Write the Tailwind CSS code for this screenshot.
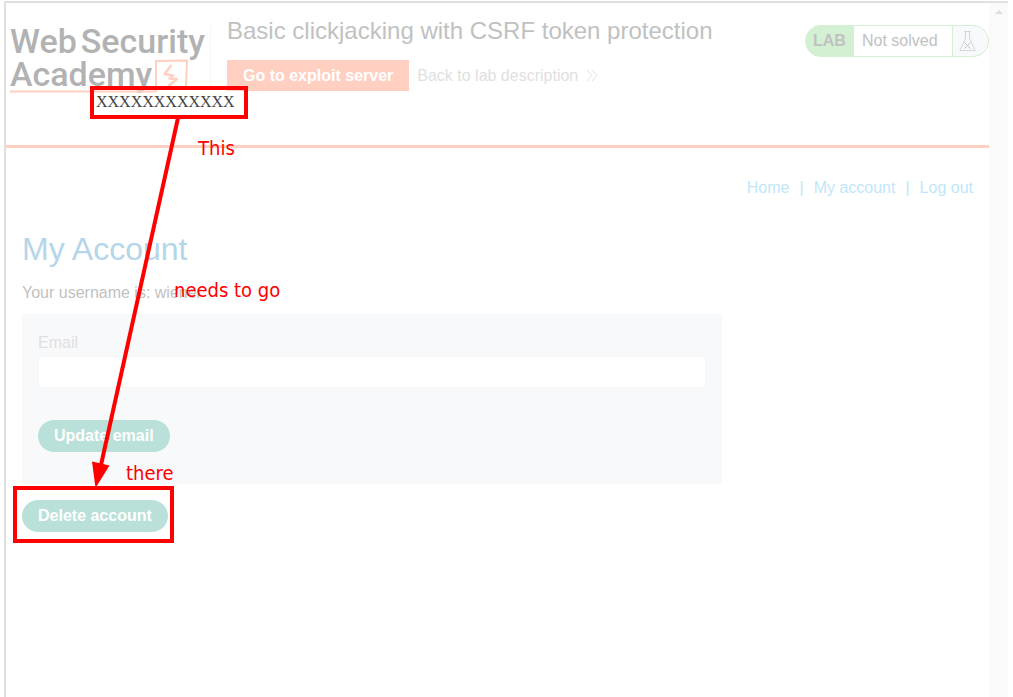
<!DOCTYPE html>
<html lang="en">
<head>
<meta charset="utf-8">
<title>Basic clickjacking with CSRF token protection</title>
<script src="https://cdn.jsdelivr.net/npm/@tailwindcss/browser@4"></script>
</head>
<body class="relative min-h-screen overflow-hidden bg-white pt-px pr-[5px] pl-1 font-['Liberation_Sans',Arial,sans-serif] text-base text-[#c1c1c1]">
<div class="flex min-h-screen border-t-2 border-l-2 border-[#e0e0e0]">
  <div class="min-w-0 flex-1">
    <header class="flex h-[145px] items-start border-b-3 border-[#ffd0c2]">
      <a href="#" aria-label="Web Security Academy" class="relative mt-[22px] ml-1 w-[201px] border-r border-[#f7f7f7] font-['Roboto',sans-serif] text-[34px] leading-[33px] font-medium whitespace-nowrap text-[#b2b2b2]">
        <span class="flex gap-1"><span>Web</span><span>Security</span></span>
        <span class="block">Academy</span>
        <svg class="absolute top-[33px] left-0" width="182" height="36" fill="none" stroke="#ffd0c2" aria-hidden="true">
          <path d="M-2 33.500H146M146 34V3L177 2.500L176 30" stroke-width="2"/>
          <path d="M161.500 7L154.500 16L163 17.500L159.500 20.500L167 21L158 28.500" stroke-width="2.500" stroke-linejoin="round"/>
        </svg>
      </a>
      <div class="min-w-0 flex-1 pt-3.5 pl-4">
        <h1 class="text-2xl leading-7 whitespace-nowrap">Basic clickjacking with CSRF token protection</h1>
        <div class="mt-[15px] flex items-center gap-2">
          <button class="h-[31px] bg-[#ffd0c2] px-4 font-bold whitespace-nowrap text-white">Go to exploit server</button>
          <a href="#" class="flex items-center gap-2 whitespace-nowrap text-[#e0e0e0]">Back to lab description
            <svg width="13" height="13" fill="none" stroke="#e0e0e0" aria-hidden="true"><path d="M1 1L6 6.500L1 12M6 1L11 6.500L6 12"/></svg>
          </a>
        </div>
      </div>
      <div class="mt-[22px] flex h-8 shrink-0 overflow-hidden rounded-full border border-[#d3f0d3] bg-[#d3f0d3] leading-[30px]">
        <span class="w-12 pl-[7px] font-bold">LAB</span>
        <span class="w-[98px] bg-white pl-2">Not solved</span>
        <span class="ml-px flex w-[35px] items-center bg-[#f8f9fb] pl-1.5">
          <svg width="17" height="20" fill="none" stroke="#d6d6d6" aria-hidden="true"><path d="M5 .5H12M6.500 1V7L.8 19.500H16.200L10.500 7V1"/><path d="M5.500 11.500L11.500 17.500M11.500 11.500L5.500 17.500" stroke="#c1c1c1"/></svg>
        </span>
      </div>
    </header>
    <nav class="flex justify-end gap-2.5 pt-[30px] pr-4 leading-5 text-[#c0e6f8]">
      <a href="#">Home</a><span>|</span><a href="#">My account</a><span>|</span><a href="#">Log out</a>
    </nav>
    <main class="px-4 pt-[31px]">
      <h2 class="text-[32px] leading-10 text-[#b5d6ea]">My Account</h2>
      <p class="mt-3.5 leading-5">Your username is: wiener</p>
      <form class="mt-[11px] h-[170px] max-w-[700px] bg-[#f8f9fb] px-4 pt-[19px]">
        <label for="email" class="block leading-5 text-[#e0e0e0]">Email</label>
        <input id="email" type="email" class="mt-[3px] block h-8 w-full rounded-xs border border-[#f5f5f5] bg-white px-2">
        <button type="button" class="mt-8 h-8 rounded-full bg-[#b9e1d9] px-4 font-bold text-white">Update email</button>
      </form>
      <button class="mt-4 h-8 rounded-full bg-[#b9e1d9] px-4 font-bold text-white">Delete account</button>
    </main>
  </div>
  <div class="flex w-[19px] shrink-0 justify-center bg-[#fafafa] pt-[7px]">
    <svg width="8" height="4" fill="#dedede" aria-hidden="true"><path d="M0 4L4 0L8 4Z"/></svg>
  </div>
</div>

<!-- Annotations drawn over the page -->
<div class="absolute top-[86px] left-[90px] h-[33px] w-[158px] border-4 border-[#f00] pl-[2px] font-['Liberation_Serif',serif] leading-6 text-[#444]">XXXXXXXXXXXX</div>
<div class="absolute top-[486px] left-[13px] h-[57px] w-[161px] border-4 border-[#f00]"></div>
<svg class="absolute top-0 left-0" width="260" height="500" aria-hidden="true">
  <path d="M178 118L101 465" stroke="#f00" stroke-width="4"/>
  <path d="M92 461.500L109.500 465.500L95.500 488Z" fill="#f00"/>
</svg>
<div class="font-['DejaVu_Sans_Condensed','DejaVu_Sans',sans-serif] text-xl leading-6 whitespace-nowrap text-[#f00]">
  <span class="absolute top-[136px] left-[198px]">This</span>
  <span class="absolute top-[278px] left-[174px]">needs to go</span>
  <span class="absolute top-[461px] left-[126px]">there</span>
</div>
</body>
</html>
